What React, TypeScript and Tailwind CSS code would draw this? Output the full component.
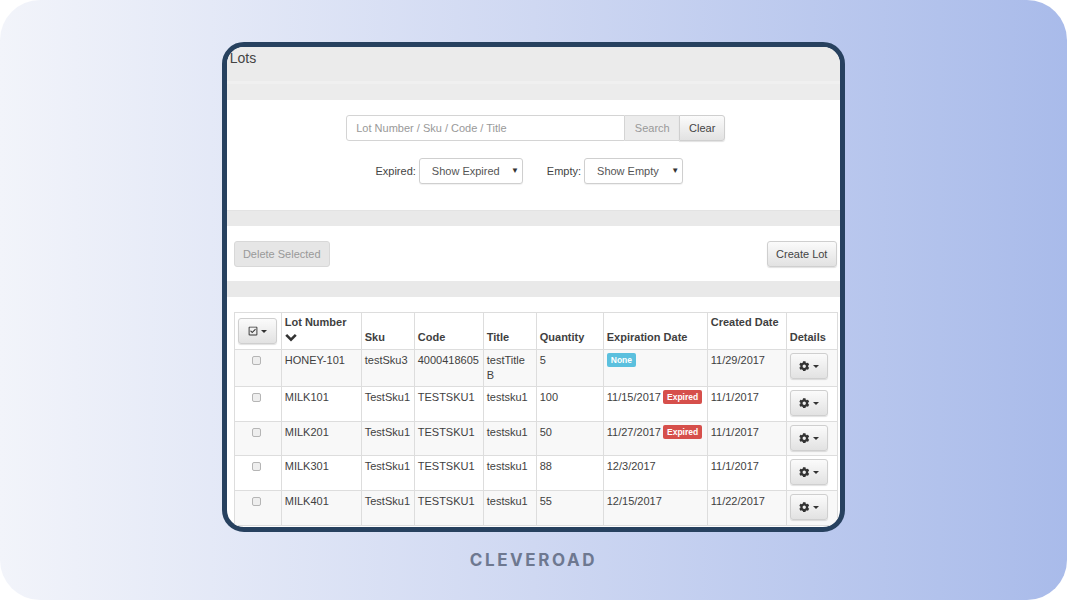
import React from "react";
import { FaCog, FaRegCheckSquare } from "react-icons/fa";

const btn = "rounded-[3px] border border-[#cfcfcf] bg-gradient-to-b from-[#fbfbfb] to-[#e2e2e2] shadow-[0_1px_1px_rgba(0,0,0,0.12)] text-[#444]";

function Caret() {
  return <span className="inline-block w-0 h-0 border-x-[3px] border-x-transparent border-t-[3px] border-t-[#333]" />;
}

function Select({ label, width }: { label: string; width: string }) {
  return (
    <div className={`${width} h-[26px] rounded-[3px] border border-[#cfcfcf] bg-white flex items-center justify-between pl-3 pr-[3px] text-[#555] shadow-[0_1px_1px_rgba(0,0,0,0.06)]`}>
      <span>{label}</span>
      <span className="text-[8px] text-[#333]">▼</span>
    </div>
  );
}

type Row = { lot: string; sku: string; code: string; title: React.ReactNode; qty: string; exp: string; badge?: "None" | "Expired"; created: string; h: string };

const rows: Row[] = [
  { lot: "HONEY-101", sku: "testSku3", code: "4000418605", title: <>testTitle<br />B</>, qty: "5", exp: "", badge: "None", created: "11/29/2017", h: "h-[37px]" },
  { lot: "MILK101", sku: "TestSku1", code: "TESTSKU1", title: "testsku1", qty: "100", exp: "11/15/2017", badge: "Expired", created: "11/1/2017", h: "h-[35px]" },
  { lot: "MILK201", sku: "TestSku1", code: "TESTSKU1", title: "testsku1", qty: "50", exp: "11/27/2017", badge: "Expired", created: "11/1/2017", h: "h-[34px]" },
  { lot: "MILK301", sku: "TestSku1", code: "TESTSKU1", title: "testsku1", qty: "88", exp: "12/3/2017", created: "11/1/2017", h: "h-[35px]" },
  { lot: "MILK401", sku: "TestSku1", code: "TESTSKU1", title: "testsku1", qty: "55", exp: "12/15/2017", created: "11/22/2017", h: "h-[35px]" },
];

const td = "border border-[#dddddd] align-top px-[3px] pt-[3px] leading-[14.5px]";
const th = "border border-[#dddddd] align-bottom px-[3px] pb-[4px] font-bold text-left leading-[15px]";

export default function App() {
  return (
    <div className="w-[1067px] h-[600px] overflow-hidden bg-white font-['Liberation_Sans',Arial,sans-serif]">
      <div className="w-full h-full rounded-[40px] bg-gradient-to-r from-[#f2f4fa] via-[#cfd8f2] to-[#a9bbea] flex flex-col items-center pt-[42px]">
        <div className="w-[623px] h-[490px] rounded-[22px] border-[5px] border-[#27415f] bg-white overflow-hidden text-[11px] text-[#3f3f3f] ml-[-0.5px]">
          <div className="h-[34px] bg-[#ebebeb] pl-[3px] pt-[3px] text-[14px] leading-[17px] text-[#444]">Lots</div>
          <div className="h-[3px] bg-[#f0f0f0]" />
          <div className="h-[16px] bg-[#ececec]" />
          <div className="h-[111px] flex flex-col items-center pt-[15px] border-b border-b-[#e3e3e3]">
            <div className="flex h-[26px] ml-[5px]">
              <div className="w-[279px] rounded-l-[3px] border border-[#d4d4d4] flex items-center pl-[9px] text-[#999]">Lot Number / Sku / Code / Title</div>
              <div className="w-[54px] bg-[#ececec] border-y border-[#d8d8d8] flex items-center justify-center text-[#999]">Search</div>
              <div className={`w-[46px] flex items-center justify-center rounded-l-none ${btn}`}>Clear</div>
            </div>
            <div className="flex items-center mt-[17px] text-[#444] ml-[-8px]">
              <span className="mr-[3px]">Expired:</span>
              <Select label="Show Expired" width="w-[104px]" />
              <span className="ml-[24px] mr-[3px]">Empty:</span>
              <Select label="Show Empty" width="w-[99px]" />
            </div>
          </div>
          <div className="h-[15px] bg-[#e9e9e9]" />
          <div className="h-[55px] flex items-start justify-between pl-[7px] pr-[3px] pt-[15px]">
            <div className="w-[96px] h-[26px] rounded-[3px] border border-[#d8d8d8] bg-[#e6e6e6] flex items-center justify-center text-[#999]">Delete Selected</div>
            <div className={`w-[70px] h-[26px] flex items-center justify-center ${btn}`}>Create Lot</div>
          </div>
          <div className="h-[16px] bg-[#e9e9e9]" />
          <div className="pt-[15px] pl-[7px]">
            <table className="w-[603px] table-fixed border-collapse">
              <colgroup>
                <col className="w-[47px]" />
                <col className="w-[80px]" />
                <col className="w-[53px]" />
                <col className="w-[69px]" />
                <col className="w-[53px]" />
                <col className="w-[67px]" />
                <col className="w-[104px]" />
                <col className="w-[79px]" />
                <col className="w-[51px]" />
              </colgroup>
              <thead>
                <tr className="h-[37px]">
                  <th className="border border-[#dddddd] align-middle px-[3px]">
                    <div className={`w-[39px] h-[26px] mx-auto flex items-center justify-center gap-[3px] ${btn}`}>
                      <FaRegCheckSquare className="w-[10px] h-[10px] text-[#333]" />
                      <Caret />
                    </div>
                  </th>
                  <th className="border border-[#dddddd] align-top px-[3px] pt-[2px] font-bold text-left leading-[15px]">
                    Lot Number
                    <svg viewBox="0 0 12 9" className="w-[12px] h-[9px] mt-[3px]" fill="none" stroke="#333" strokeWidth="2.6">
                      <path d="M1.2 1.8 L6 6.6 L10.8 1.8" />
                    </svg>
                  </th>
                  <th className={th}>Sku</th>
                  <th className={th}>Code</th>
                  <th className={th}>Title</th>
                  <th className={th}>Quantity</th>
                  <th className={th}>Expiration Date</th>
                  <th className="border border-[#dddddd] align-top px-[3px] pt-[2px] font-bold text-left leading-[15px]">Created Date</th>
                  <th className={th}>Details</th>
                </tr>
              </thead>
              <tbody>
                {rows.map((r, i) => (
                  <tr key={r.lot} className={`${r.h} ${i % 2 === 0 ? "bg-[#f8f8f8]" : "bg-white"}`}>
                    <td className="border border-[#dddddd] align-top text-center pr-[2px] pt-[3px] leading-[14.5px]">
                      <span className="inline-block w-[9px] h-[9px] mt-[3px] rounded-[2px] border border-[#b5b5b5] bg-[#eeeeee]" />
                    </td>
                    <td className={td}>{r.lot}</td>
                    <td className={td}>{r.sku}</td>
                    <td className={td}>{r.code}</td>
                    <td className={td}>{r.title}</td>
                    <td className={td}>{r.qty}</td>
                    <td className={td}>
                      <div className="flex items-center gap-[2px] whitespace-nowrap">
                        {r.exp && <span>{r.exp}</span>}
                        {r.badge === "None" && <span className="rounded-[2px] bg-[#5bc0de] text-white text-[8.5px] font-bold leading-[14px] px-[4px]">None</span>}
                        {r.badge === "Expired" && <span className="rounded-[2px] bg-[#d64f4b] text-white text-[8.5px] font-bold leading-[14px] px-[4px]">Expired</span>}
                      </div>
                    </td>
                    <td className={td}>{r.created}</td>
                    <td className="border border-[#dddddd] align-top pl-[3px] pt-[3px]">
                      <div className={`w-[38px] h-[26px] flex items-center justify-center gap-[3px] ${btn}`}>
                        <FaCog className="w-[10.5px] h-[10.5px] text-[#333]" />
                        <Caret />
                      </div>
                    </td>
                  </tr>
                ))}
              </tbody>
            </table>
          </div>
        </div>
        <div className="mt-[18px] text-[17px] leading-[20px] font-bold tracking-[2.6px] text-[#6e7890] font-['Inter',sans-serif]">CLEVEROAD</div>
      </div>
    </div>
  );
}
